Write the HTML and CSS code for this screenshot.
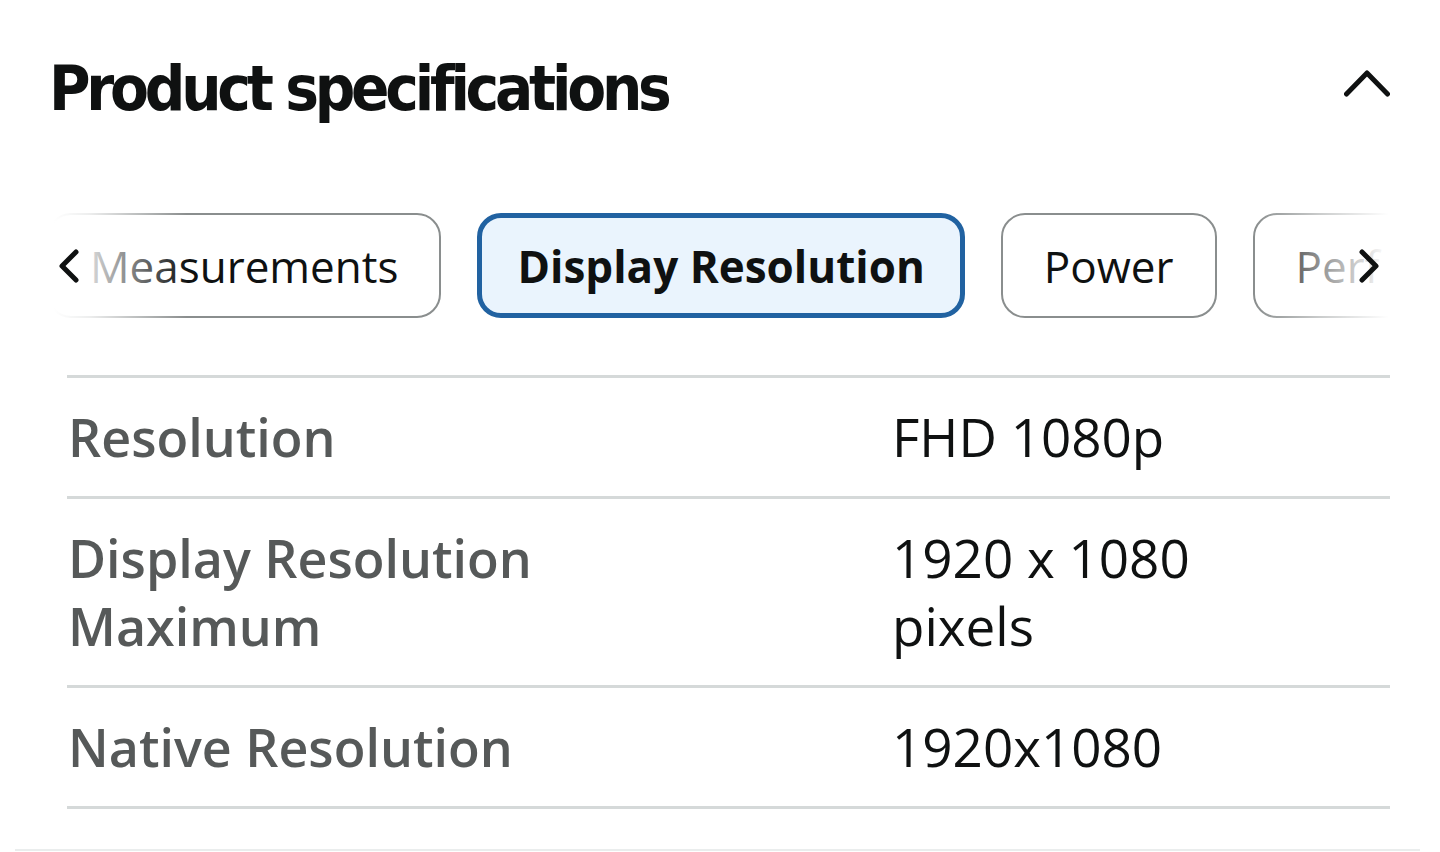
FILE: index.html
```html
<!DOCTYPE html>
<html lang="en">
<head>
<meta charset="utf-8">
<title>Product specifications</title>
<link rel="stylesheet" href="styles.css">
</head>
<body>
<section class="specs">
  <header class="specs-header">
    <h2 class="specs-title">Product specifications</h2>
    <button class="collapse-btn" aria-label="Collapse">
      <svg width="46" height="29" viewBox="0 0 46 29"><polyline points="2.5,26 23,5 43.5,26" fill="none" stroke="#0f1111" stroke-width="5" stroke-linecap="round" stroke-linejoin="round"/></svg>
    </button>
  </header>

  <div class="tabs-wrap">
    <div class="tabs">
      <span class="tab">Measurements</span>
      <span class="tab tab-active">Display Resolution</span>
      <span class="tab">Power</span>
      <span class="tab tab-clipped">Perf</span>
    </div>
    <div class="fade fade-left"></div>
    <div class="fade fade-right"></div>
    <svg class="arrow arrow-left" width="24" height="34" viewBox="0 0 24 34"><polyline points="19,3 5,17 19,31" fill="none" stroke="#0f1111" stroke-width="5" stroke-linecap="round" stroke-linejoin="round"/></svg>
    <svg class="arrow arrow-right" width="24" height="34" viewBox="0 0 24 34"><polyline points="5,3 19,17 5,31" fill="none" stroke="#0f1111" stroke-width="5" stroke-linecap="round" stroke-linejoin="round"/></svg>
  </div>

  <div class="spec-table">
    <div class="spec-row">
      <div class="spec-label">Resolution</div>
      <div class="spec-value">FHD 1080p</div>
    </div>
    <div class="spec-row">
      <div class="spec-label">Display Resolution Maximum</div>
      <div class="spec-value">1920 x 1080 pixels</div>
    </div>
    <div class="spec-row">
      <div class="spec-label">Native Resolution</div>
      <div class="spec-value">1920x1080</div>
    </div>
  </div>
</section>
<div class="page-divider"></div>
</body>
</html>
```

FILE: styles.css
```css
html, body {
  margin: 0;
  padding: 0;
  background: #ffffff;
}

body {
  font-family: "Open Sans", "Noto Sans", "Liberation Sans", sans-serif;
  color: #0f1111;
  width: 1440px;
  overflow: hidden;
}

.specs {
  padding: 0 50px 0 52px;
}

.specs-header {
  display: flex;
  justify-content: space-between;
  align-items: flex-start;
  padding-top: 55px;
}

.specs-title {
  margin: 0 0 0 -3px;
  font-family: "DejaVu Sans Condensed", Roboto, "Liberation Sans", sans-serif;
  font-weight: 900;
  font-size: 63px;
  line-height: 68px;
  letter-spacing: -4.2px;
  color: #0f1111;
}

.collapse-btn {
  border: 0;
  background: none;
  padding: 0;
  margin-top: 13px;
  width: 46px;
  height: 29px;
  display: flex;
  cursor: pointer;
}

.tabs-wrap {
  position: relative;
  margin: 90px -50px 0 -5px;
  height: 105px;
  overflow: hidden;
}

.tabs {
  display: flex;
  gap: 36px;
  white-space: nowrap;
}

.tab {
  box-sizing: border-box;
  flex: none;
  display: flex;
  align-items: center;
  height: 105px;
  padding: 0 41px;
  border: 2px solid #8a8e8e;
  border-radius: 24px;
  font-size: 44px;
  font-weight: 400;
  color: #0f1111;
  background: #ffffff;
}

.tab-active {
  border: 5px solid #2162a1;
  padding: 0 35px;
  background: #eaf4fd;
  font-weight: 700;
}

.tab-clipped {
  width: 200px;
}

.fade {
  position: absolute;
  top: 0;
  bottom: 0;
  pointer-events: none;
}

.fade-left {
  left: 0;
  width: 140px;
  background: linear-gradient(to right, #ffffff 5%, rgba(255,255,255,0.85) 30%, rgba(255,255,255,0) 100%);
}

.fade-right {
  left: 1208px;
  right: 0;
  background: linear-gradient(to right, rgba(255,255,255,0) 0%, rgba(255,255,255,0.55) 35%, #ffffff 72%);
}

.arrow {
  position: absolute;
  top: 36px;
}

.arrow-left {
  left: 10px;
}

.arrow-right {
  left: 1310px;
}

.spec-table {
  margin: 57px 0 0 15px;
  border-bottom: 3px solid #d5d9d9;
}

.spec-row {
  display: grid;
  grid-template-columns: 825px 370px;
  border-top: 3px solid #d5d9d9;
  padding: 25px 0;
  line-height: 68px;
}

.spec-label {
  font-size: 52px;
  font-weight: 600;
  color: #565959;
  padding-left: 1px;
  padding-right: 240px;
}

.spec-value {
  font-size: 53px;
  font-weight: 400;
  color: #0f1111;
}

.page-divider {
  margin: 40px 20px 0 15px;
  height: 2px;
  background: #eaeded;
}
```
